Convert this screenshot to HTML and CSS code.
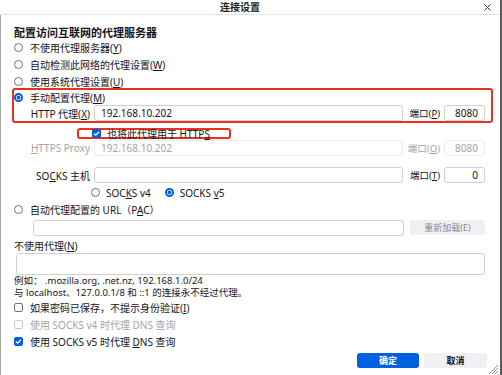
FILE: index.html
```html
<!doctype html>
<html>

<head>
    <title>连接设置</title>
    <link rel="stylesheet" href="styles.css">
</head>

<body>
    <div class="window">
        <div class="titlebar">
            <span class="title">连接设置</span>
            <svg class="close" width="7" height="7" viewBox="0 0 7 7">
                <path d="M0.5 0.5L6.5 6.5M6.5 0.5L0.5 6.5" stroke="#333" stroke-width="1" />
            </svg>
        </div>

        <div class="content">
            <h1 class="heading">配置访问互联网的代理服务器</h1>
            <div class="opt"><span class="radio"></span><span>不使用代理服务器(<u>Y</u>)</span></div>
            <div class="opt"><span class="radio"></span><span>自动检测此网络的代理设置(<u>W</u>)</span></div>
            <div class="opt"><span class="radio"></span><span>使用系统代理设置(<u>U</u>)</span></div>

            <div class="mark-box">
                <div class="opt short"><span class="radio on"></span><span>手动配置代理(<u>M</u>)</span></div>
                <div class="proxy-row">
                    <span class="row-label">HTTP 代理(<u>X</u>)</span>
                    <input class="field" type="text" value="192.168.10.202">
                    <span class="port-label">端口(<u>P</u>)</span>
                    <input class="field port" type="text" value="8080">
                </div>
            </div>

            <div class="https-line">
                <span class="mark-small"><span class="check on"></span><span>也将此代理用于 HTTP<u>S</u></span></span>
            </div>

            <div class="proxy-row https-row disabled">
                <span class="row-label"><u>H</u>TTPS Proxy</span>
                <input class="field" type="text" value="192.168.10.202" disabled>
                <span class="port-label">端口(<u>O</u>)</span>
                <input class="field port" type="text" value="8080" disabled>
            </div>

            <div class="proxy-row socks-row">
                <span class="row-label">SO<u>C</u>KS 主机</span>
                <input class="field" type="text" value="">
                <span class="port-label">端口(<u>T</u>)</span>
                <input class="field port" type="text" value="0">
            </div>

            <div class="socks-version">
                <span class="radio"></span><span class="version-text">SOC<u>K</u>S v4</span>
                <span class="radio on"></span><span>SOCKS <u>v</u>5</span>
            </div>

            <div class="opt"><span class="radio"></span><span>自动代理配置的 URL（P<u>A</u>C）</span></div>
            <div class="pac-row">
                <input class="field" type="text" value="">
                <button class="reload-btn" type="button">重新加载(E)</button>
            </div>

            <div class="no-proxy-label">不使用代理(<u>N</u>)</div>
            <textarea class="no-proxy"></textarea>
            <p class="hint">例如： .mozilla.org, .net.nz, 192.168.1.0/24<br>与 localhost、127.0.0.1/8 和 ::1 的连接永不经过代理。</p>

            <div class="checks">
                <div class="opt"><span class="check"></span><span>如果密码已保存，不提示身份验证(<u>I</u>)</span></div>
                <div class="opt disabled"><span class="check"></span><span>使用 SOCKS v4 时代理 DNS 查询</span></div>
                <div class="opt"><span class="check on"></span><span>使用 SOCKS v5 时代理 <u>D</u>NS 查询</span></div>
            </div>

            <div class="actions">
                <button class="ok-btn" type="button">确定</button>
                <button class="cancel-btn" type="button">取消</button>
            </div>
        </div>

        <svg class="grip" width="12" height="10" viewBox="0 0 12 10">
            <path d="M3 10L12 1M6 10L12 4M9 10L12 7" stroke="#9a9a9a" stroke-width="1" />
        </svg>
    </div>
</body>

</html>
```

FILE: styles.css
```css
body {
    margin: 0;
    font-family: "Noto Sans", "Noto Sans CJK SC", sans-serif;
    font-size: 10px;
    color: #15141a;
    background: #fff;
}

.window {
    position: relative;
    width: 502px;
    height: 375px;
    box-sizing: border-box;
    border-right: 2px solid #5c5c5c;
    overflow: hidden;
}

.titlebar {
    height: 14px;
    border-bottom: 1px solid #e6e6e6;
    display: flex;
    align-items: center;
}

.title {
    flex: 1;
    text-align: center;
    font-size: 10px;
    font-weight: 700;
    color: #222;
    line-height: 14px;
}

.close {
    margin: 0 9px 0 4px;
}

.content {
    height: 360px;
    box-sizing: border-box;
    border-left: 1px solid #a8a8a8;
    padding: 11px 15px 0 13px;
}

.heading {
    margin: 0;
    font-size: 11px;
    font-weight: 700;
    line-height: 13px;
}

u {
    text-decoration: underline;
}

.opt {
    display: flex;
    align-items: center;
    gap: 7px;
    height: 17px;
    white-space: nowrap;
}

.opt.short {
    height: 15px;
}

.radio {
    width: 9px;
    height: 9px;
    box-sizing: border-box;
    border: 1px solid #6f6f78;
    border-radius: 50%;
    flex: none;
}

.radio.on {
    border: 2px solid #0061e0;
    background: radial-gradient(circle, #0061e0 0, #0061e0 1.6px, #fff 2.2px);
}

.check {
    width: 9px;
    height: 9px;
    box-sizing: border-box;
    border: 1px solid #6f6f78;
    border-radius: 2px;
    flex: none;
}

.check.on {
    border-color: #0061e0;
    background: #0061e0 url("data:image/svg+xml,%3Csvg xmlns='http://www.w3.org/2000/svg' width='9' height='9' viewBox='0 0 9 9'%3E%3Cpath d='M2 4.6L3.7 6.2L7 2.8' fill='none' stroke='white' stroke-width='1.3'/%3E%3C/svg%3E") center / 9px 9px no-repeat;
}

.mark-box {
    margin: -2px -8px 0 -2px;
    border: 2px solid #e8321e;
    border-radius: 3px;
    padding: 0 6px 0 0;
}

.proxy-row {
    display: grid;
    grid-template-columns: 76px 1fr 33px 41px;
    column-gap: 4px;
    align-items: center;
    height: 16px;
    white-space: nowrap;
}

.row-label {
    text-align: right;
}

.port-label {
    font-size: 9.5px;
    text-align: right;
}

.field {
    height: 16px;
    box-sizing: border-box;
    border: 1px solid #cfcfd4;
    border-radius: 3px;
    padding: 0 6px;
    font-family: inherit;
    font-size: 10px;
    color: #15141a;
    background: #fff;
    width: 100%;
    margin: 0;
}

.field.port {
    text-align: right;
    padding-right: 6px;
}

.disabled,
.disabled .field {
    color: #a4a4a8;
}

.disabled .field {
    border-color: #ececee;
}

.https-line {
    margin-top: 4px;
    height: 11px;
}

.mark-small {
    display: inline-flex;
    align-items: center;
    gap: 6px;
    box-sizing: border-box;
    width: 154px;
    height: 11px;
    margin-left: 63px;
    padding-left: 13px;
    border: 2px solid #e8321e;
    border-radius: 3px;
    white-space: nowrap;
    line-height: 8px;
}

.https-row {
    margin-top: 2px;
}

.socks-row {
    margin-top: 11px;
}

.socks-version {
    display: flex;
    align-items: center;
    gap: 6px;
    height: 17px;
    margin-top: 1px;
    padding-left: 77px;
}

.version-text {
    margin-right: 8px;
}

.pac-row {
    display: flex;
    gap: 6px;
    margin-top: 2px;
    padding-left: 19px;
}

.reload-btn {
    flex: none;
    width: 75px;
    height: 15px;
    border: none;
    border-radius: 3px;
    background: #f0f0f4;
    color: #8a8a8e;
    font-family: inherit;
    font-size: 9px;
    padding: 0;
}

.no-proxy-label {
    margin-top: 4px;
    line-height: 13px;
}

.no-proxy {
    display: block;
    width: 469px;
    height: 22px;
    box-sizing: border-box;
    margin: 0 0 0 2px;
    border: 1px solid #cfcfd4;
    border-radius: 3px;
    resize: none;
}

.hint {
    margin: 0;
    font-size: 9.5px;
    line-height: 12px;
    white-space: nowrap;
}

.checks {
    margin-top: 0;
}

.checks .disabled .check {
    border-color: #c8c8cc;
}

.actions {
    display: flex;
    justify-content: flex-end;
    gap: 5px;
    margin: 3px -2px 0 0;
}

.ok-btn,
.cancel-btn {
    width: 62px;
    height: 15px;
    border: none;
    border-radius: 3px;
    font-family: inherit;
    font-size: 9px;
    font-weight: 700;
    padding: 0;
}

.ok-btn {
    background: #0061e0;
    color: #fff;
}

.cancel-btn {
    width: 63px;
    background: #f0f0f4;
    color: #15141a;
}

.grip {
    position: absolute;
    right: 2px;
    bottom: 1px;
}
```
